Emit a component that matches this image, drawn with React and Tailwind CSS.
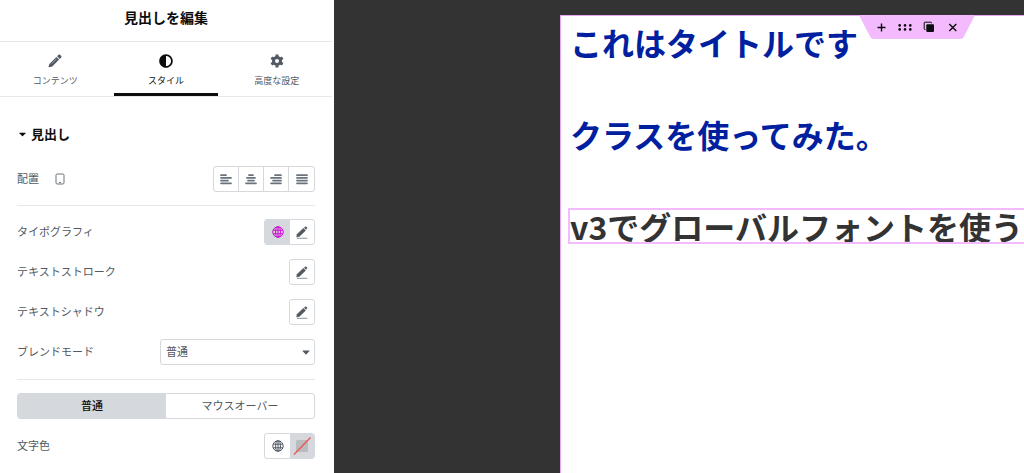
import React from "react";
import { FaAdjust } from "react-icons/fa";

const ALIGNMENTS = [
  { label: "左寄せ", lines: [[1, 6], [1, 11], [1, 8], [1, 11]] },
  { label: "中央寄せ", lines: [[4, 8], [2, 10], [3, 9], [1, 11]] },
  { label: "右寄せ", lines: [[5, 11], [1, 11], [3, 11], [1, 11]] },
  { label: "両端揃え", lines: [[1, 11], [1, 11], [1, 11], [1, 11]] },
];

function AlignIcon({ lines }) {
  return (
    <svg viewBox="0 0 12 12" className="h-3 w-3" stroke="#69727d" strokeWidth="1.7" strokeLinecap="round">
      {lines.map(([x1, x2], i) => (
        <line key={i} x1={x1} x2={x2} y1={2.2 + i * 2.7} y2={2.2 + i * 2.7} />
      ))}
    </svg>
  );
}

function PencilIcon() {
  return (
    <svg viewBox="0 0 14 14" className="h-[14px] w-[14px]" fill="currentColor">
      <path d="M8.400 2.900 11.100 5.600 4.300 12.400 .9 13.200Q.4 13.300 .5 12.800L1.400 9.900Z" />
      <path d="M9.100 2.200 10.500 .8Q11.300.1 12.100.8L13.200 1.900Q13.900 2.700 13.200 3.500L11.800 4.900Z" />
      <path d="M3.600 9.800 8.500 4.900" stroke="#fff" strokeWidth=".4" />
    </svg>
  );
}

function GearIcon() {
  return (
    <svg viewBox="0 0 14 14" className="h-[14px] w-[14px]" fill="none" stroke="currentColor">
      <circle cx="7" cy="7" r="3.500" strokeWidth="3" />
      <path d="M7 .4v2.400M7 11.200v2.400M1.300 3.700l2.100 1.200M10.600 9.100l2.100 1.200M1.300 10.300l2.100-1.200M10.600 4.900l2.100-1.200" strokeWidth="3" />
    </svg>
  );
}

function GlobeIcon() {
  return (
    <svg viewBox="0 0 12 12" className="h-3 w-3" fill="none" stroke="currentColor" strokeWidth="1">
      <circle cx="6" cy="6" r="5.2" />
      <ellipse cx="6" cy="6" rx="2.4" ry="5.2" />
      <path d="M1.3 4.2h9.4M1.3 7.8h9.4M6 .8v10.4" />
    </svg>
  );
}

function EditIcon() {
  return (
    <svg viewBox="0 0 12 13" className="h-[13px] w-3" fill="#515962">
      <path d="M7.3 2.3 9.6 4.6 3.4 10.4 .6 11 1.1 8.2Z" stroke="#515962" strokeWidth=".4" />
      <path d="M8 1.7 9 .8Q9.8.2 10.7 1 11.6 1.9 10.9 2.8L10.1 3.8Z" />
      <path d="M.8 11.8h10.6v1H.8z" fill="#8b929a" />
    </svg>
  );
}

function Caret({ className }) {
  return (
    <svg viewBox="0 0 8 5" className={className} fill="currentColor">
      <path d="M.8.4h6.4q.7.1.3.7L4.5 4.3q-.5.5-1 0L.5 1.1Q.1.5.8.4Z" />
    </svg>
  );
}

function Row({ label, extra, children }) {
  return (
    <div className="flex h-[26px] items-center justify-between">
      <div className="flex items-center gap-4">
        <span>{label}</span>
        {extra}
      </div>
      {children}
    </div>
  );
}

function EditButton({ label }) {
  return (
    <button
      type="button"
      aria-label={label}
      className="flex h-[26px] w-[26px] items-center justify-center rounded-[3px] border border-[#d5d8dc]"
    >
      <EditIcon />
    </button>
  );
}

function Tab({ icon, label, active }) {
  return (
    <button
      type="button"
      role="tab"
      aria-selected={active}
      className={`mx-[3px] flex flex-1 flex-col items-center gap-[7px] border-b-[3px] pt-3 text-[9px] leading-3 ${
        active ? "border-[#0c0d0e] text-[#0c0d0e]" : "border-transparent text-[#515962]"
      }`}
    >
      {icon}
      <span>{label}</span>
    </button>
  );
}

function Panel() {
  return (
    <aside className="w-[334px] shrink-0 bg-white pr-[2px] text-[11px] leading-4 text-[#515962]">
      <header className="flex h-[42px] items-center justify-center border-b border-[#e6e8ea] pb-[5px]">
        <h1 className="text-[14px] leading-5 font-bold text-[#0c0d0e]">見出しを編集</h1>
      </header>
      <div role="tablist" className="flex h-[55px] border-b border-[#e6e8ea]">
        <Tab icon={<PencilIcon />} label="コンテンツ" active={false} />
        <Tab icon={<FaAdjust className="h-[14px] w-[14px]" />} label="スタイル" active={true} />
        <Tab icon={<GearIcon />} label="高度な設定" active={false} />
      </div>

      <section className="px-[17px] pt-[27px] pb-[14px]">
        <button type="button" className="flex items-center gap-[5px] pl-[2px] text-[13px] leading-5 font-bold text-[#0c0d0e]">
          <Caret className="h-[5px] w-[7px]" />
          見出し
        </button>

        <div className="mt-[22px]">
          <Row
            label="配置"
            extra={
              <button type="button" aria-label="表示デバイス">
                <svg viewBox="0 0 10 12" className="h-3 w-[10px]" fill="none" stroke="#69727d">
                  <rect x="1" y="1" width="8" height="10" rx="1.2" />
                  <path d="M4 9.5h2" />
                </svg>
              </button>
            }
          >
            <div className="flex divide-x divide-[#d5d8dc] rounded-[3px] border border-[#d5d8dc]">
              {ALIGNMENTS.map((a) => (
                <button
                  key={a.label}
                  type="button"
                  aria-label={a.label}
                  className="flex h-6 w-[25px] items-center justify-center"
                >
                  <AlignIcon lines={a.lines} />
                </button>
              ))}
            </div>
          </Row>
        </div>

        <div className="mt-[13px] flex flex-col gap-[14px] border-t border-[#e6e8ea] pt-[13px]">
          <Row label="タイポグラフィ">
            <div className="flex overflow-hidden rounded-[3px] border border-[#d5d8dc]">
              <button
                type="button"
                aria-label="グローバルフォント"
                className="flex h-6 w-[25px] items-center justify-center bg-[#d5d8dc] text-[#d004d4]"
              >
                <GlobeIcon />
              </button>
              <button type="button" aria-label="タイポグラフィを編集" className="flex h-6 w-6 items-center justify-center">
                <EditIcon />
              </button>
            </div>
          </Row>
          <Row label="テキストストローク">
            <EditButton label="テキストストロークを編集" />
          </Row>
          <Row label="テキストシャドウ">
            <EditButton label="テキストシャドウを編集" />
          </Row>
          <Row label={<label htmlFor="blend">ブレンドモード</label>}>
            <div className="relative w-[155px]">
              <select
                id="blend"
                className="h-[26px] w-full appearance-none rounded-[3px] border border-[#d5d8dc] bg-white px-[5px] text-[11px] leading-4 text-[#515962]"
              >
                <option>普通</option>
              </select>
              <Caret className="pointer-events-none absolute top-[11px] right-[5px] h-[5px] w-2" />
            </div>
          </Row>
        </div>

        <div className="mt-[14px] flex flex-col gap-[14px] border-t border-[#e6e8ea] pt-[13px]">
          <div role="tablist" className="flex h-[26px] overflow-hidden rounded-[3px] border border-[#d5d8dc]">
            <button type="button" role="tab" aria-selected="true" className="flex-1 bg-[#d5d8dc] font-medium text-[#0c0d0e]">
              普通
            </button>
            <button type="button" role="tab" aria-selected="false" className="flex-1">
              マウスオーバー
            </button>
          </div>
          <Row label="文字色">
            <div className="flex overflow-hidden rounded-[3px] border border-[#d5d8dc]">
              <button type="button" aria-label="グローバルカラー" className="flex h-6 w-[25px] items-center justify-center">
                <GlobeIcon />
              </button>
              <button type="button" aria-label="文字色を選択" className="flex h-6 w-6 items-center justify-center bg-[#d5d8dc]">
                <svg viewBox="0 0 20 20" className="h-5 w-5">
                  <rect x="4" y="4" width="12" height="12" rx="1.5" fill="#b9bbbe" />
                  <path d="M2 18.5 18.5 1.5" stroke="#ee5350" strokeWidth="1.3" />
                </svg>
              </button>
            </div>
          </Row>
        </div>
      </section>
    </aside>
  );
}

function SectionToolbar() {
  return (
    <div className="absolute -top-px right-[49px] h-6 w-[116px] text-[#0c0d0e]">
      <svg viewBox="0 0 116 24" className="absolute inset-0 h-6 w-[116px]" fill="#f3bafd">
        <path d="M0 0H116L105 21.5Q103.7 24 101 24H15Q12.3 24 11 21.5Z" />
      </svg>
      <div className="relative flex h-6 items-center justify-center gap-3">
        <button type="button" aria-label="追加">
          <svg viewBox="0 0 12 12" className="h-3 w-3" fill="none" stroke="currentColor" strokeWidth="1.4">
            <path d="M6.500 2.500v8M2.500 6.500h8" />
          </svg>
        </button>
        <button type="button" aria-label="移動">
          <svg viewBox="0 0 12 12" className="h-3 w-3 overflow-visible" fill="currentColor">
            {[0.7, 6, 11.3].map((x) => (
              <g key={x}>
                <circle cx={x} cy="4.400" r="1.3" />
                <circle cx={x} cy="8.400" r="1.3" />
              </g>
            ))}
          </svg>
        </button>
        <button type="button" aria-label="複製">
          <svg viewBox="0 0 12 12" className="h-3 w-3">
            <path d="M2.5 8.5H1.8Q1.2 8.5 1.2 7.9V1.8Q1.2 1.2 1.8 1.2H7.9Q8.5 1.2 8.5 1.8V2.3" fill="none" stroke="currentColor" />
            <rect x="3.3" y="3.3" width="7.7" height="7.7" rx="1" fill="currentColor" />
          </svg>
        </button>
        <button type="button" aria-label="削除">
          <svg viewBox="0 0 12 12" className="h-3 w-3" fill="none" stroke="currentColor" strokeWidth="1.4">
            <path d="m2.300 3 7 7m0-7-7 7" />
          </svg>
        </button>
      </div>
    </div>
  );
}

export default function App() {
  return (
    <div className="flex h-screen overflow-hidden bg-white font-['Inter','Noto_Sans_CJK_JP',sans-serif]">
      <Panel />
      <main className="flex min-w-0 flex-1 bg-[#333333] pt-[15px] pl-[226px]">
        <section className="relative min-w-0 flex-1 border-t border-l border-[#e6a5f2] bg-white pt-[10px] pl-[9px] font-['Noto_Sans_CJK_JP',sans-serif] text-[32px] leading-8 font-bold whitespace-nowrap">
          <SectionToolbar />
          <div className="flex flex-col gap-[60px]">
            <h2 className="text-[#00209f]">これはタイトルです</h2>
            <h2 className="text-[#00209f]">クラスを使ってみた。</h2>
            <h2 className="text-[#333333] outline-2 outline-[#f3bafd]">v3でグローバルフォントを使う</h2>
          </div>
        </section>
      </main>
    </div>
  );
}
